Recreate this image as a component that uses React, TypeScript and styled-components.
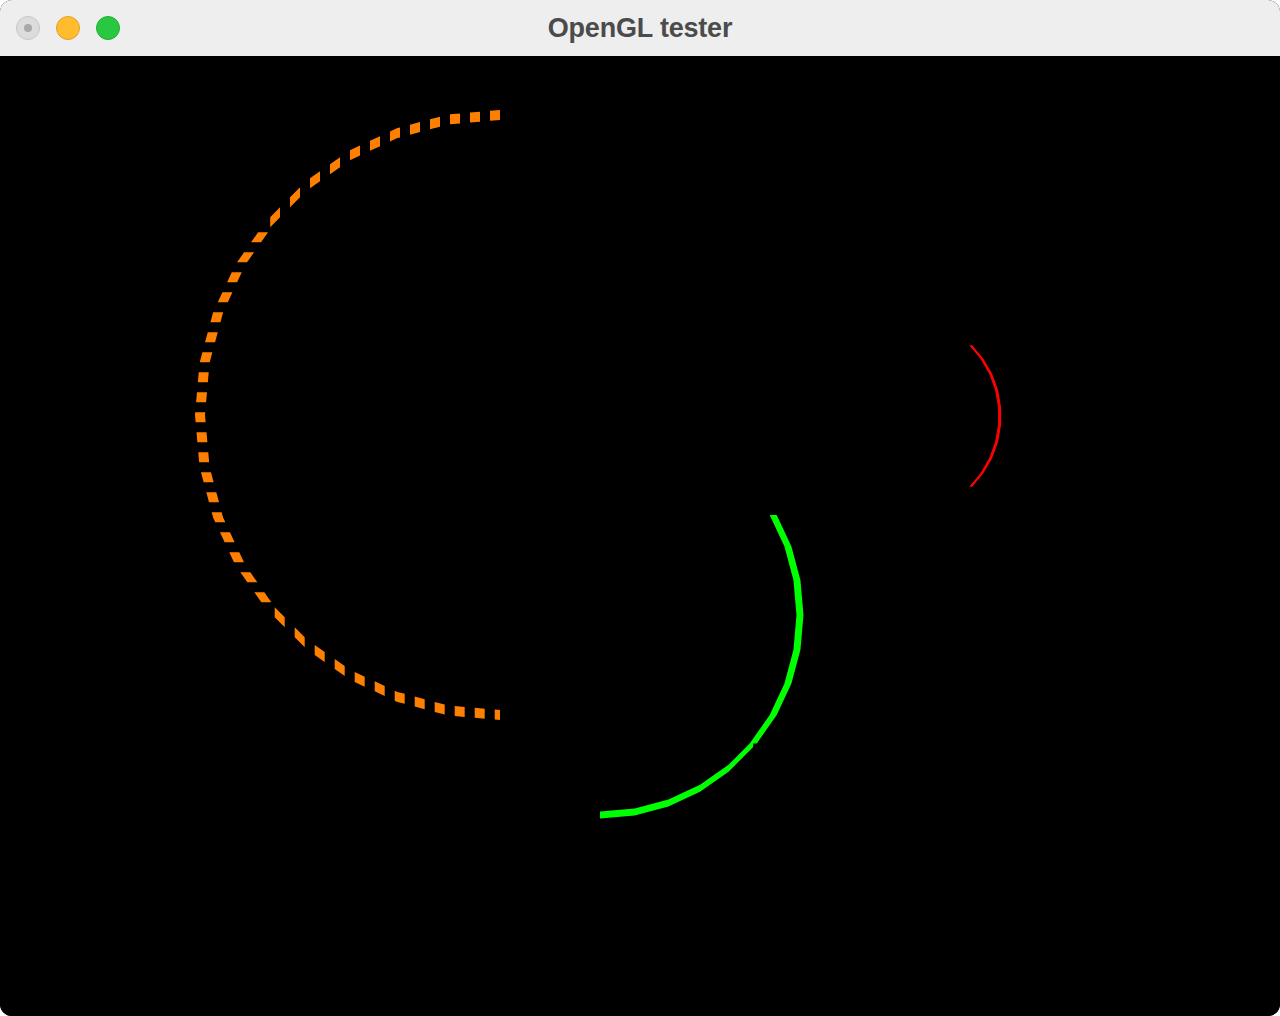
import React from "react";
import styled, { createGlobalStyle } from "styled-components";

type Pt = [number, number];

const GlobalStyle = createGlobalStyle`
  html, body {
    margin: 0;
    padding: 0;
    background: #ffffff;
  }
  body {
    font-family: "Liberation Sans", Arial, sans-serif;
  }
`;

const Window = styled.div`
  width: 1280px;
  height: 1016px;
  display: flex;
  flex-direction: column;
  border-radius: 12px;
  overflow: hidden;
  background: #000;
  box-sizing: border-box;
`;

const TitleBar = styled.div`
  height: 56px;
  flex: 0 0 56px;
  display: grid;
  grid-template-columns: 1fr auto 1fr;
  align-items: center;
  background: #eeeeee;
  box-sizing: border-box;
  padding: 0 16px;
`;

const Lights = styled.div`
  display: flex;
  align-items: center;
  gap: 16px;
`;

type LightKind = "disabled" | "minimize" | "zoom";

const lightFill: Record<LightKind, string> = {
  disabled: "#dcdcdc",
  minimize: "#febc2e",
  zoom: "#28c840",
};
const lightBorder: Record<LightKind, string> = {
  disabled: "#c6c6c6",
  minimize: "#e1a12a",
  zoom: "#22ac36",
};

const Light = styled.span<{ $kind: LightKind }>`
  width: 24px;
  height: 24px;
  box-sizing: border-box;
  border-radius: 50%;
  background: ${(p) => lightFill[p.$kind]};
  border: 1px solid ${(p) => lightBorder[p.$kind]};
  display: flex;
  align-items: center;
  justify-content: center;
`;

const LightDot = styled.span`
  width: 8px;
  height: 8px;
  border-radius: 50%;
  background: #a9a9a9;
`;

const Title = styled.div`
  font-family: "Liberation Sans", Arial, sans-serif;
  font-weight: 700;
  font-size: 27px;
  color: #4b4b4b;
  letter-spacing: -0.2px;
  line-height: 1;
  white-space: nowrap;
`;

const Canvas = styled.div`
  flex: 1;
  background: #000;
  display: flex;
`;

const Scene = styled.svg`
  display: block;
  width: 1280px;
  height: 960px;
`;

function arcPoints(
  cx: number,
  cy: number,
  r: number,
  a0: number,
  a1: number,
  n: number
): Pt[] {
  const pts: Pt[] = [];
  for (let i = 0; i <= n; i++) {
    const a = ((a0 + ((a1 - a0) * i) / n) * Math.PI) / 180;
    pts.push([cx + r * Math.cos(a), cy - r * Math.sin(a)]);
  }
  return pts;
}

function lerp(p: Pt, q: Pt, t: number): Pt {
  return [p[0] + (q[0] - p[0]) * t, p[1] + (q[1] - p[1]) * t];
}

function quad(p0: Pt, p1: Pt, h: number, xMajor: boolean): string {
  let q: Pt[] = xMajor
    ? [
        [p0[0], p0[1] - h],
        [p1[0], p1[1] - h],
        [p1[0], p1[1] + h],
        [p0[0], p0[1] + h],
      ]
    : [
        [p0[0] - h, p0[1]],
        [p1[0] - h, p1[1]],
        [p1[0] + h, p1[1]],
        [p0[0] + h, p0[1]],
      ];
  let area = 0;
  for (let i = 0; i < 4; i++) {
    const a = q[i];
    const b = q[(i + 1) % 4];
    area += a[0] * b[1] - b[0] * a[1];
  }
  if (area < 0) q = q.slice().reverse();
  return (
    "M" + q.map((p) => `${p[0].toFixed(2)} ${p[1].toFixed(2)}`).join("L") + "Z"
  );
}

function glStroke(
  pts: Pt[],
  width: number,
  dash?: { on: number; period: number }
): string {
  let d = "";
  let counter = 0;
  const h = width / 2;
  for (let i = 0; i < pts.length - 1; i++) {
    const p = pts[i];
    const q = pts[i + 1];
    const dx = q[0] - p[0];
    const dy = q[1] - p[1];
    const xMajor = Math.abs(dx) >= Math.abs(dy) - 1e-6;
    const L = Math.max(Math.abs(dx), Math.abs(dy));
    if (!dash) {
      d += quad(p, q, h, xMajor);
      continue;
    }
    let t = 0;
    let guard = 0;
    while (t < 1 - 1e-9 && guard++ < 1000) {
      const phase = ((counter % dash.period) + dash.period) % dash.period;
      const on = phase < dash.on - 1e-7;
      let remaining = on ? dash.on - phase : dash.period - phase;
      if (remaining < 1e-7) remaining = 1e-7;
      const t1 = Math.min(1, t + remaining / L);
      if (on) d += quad(lerp(p, q, t), lerp(p, q, t1), h, xMajor);
      counter += (t1 - t) * L;
      t = t1;
    }
  }
  return d;
}

const orangePath = glStroke(arcPoints(500, 415, 300, 90, 270, 18), 10, {
  on: 10,
  period: 20,
});
const redPath = glStroke(arcPoints(900, 416, 100, 45, -45, 9), 3);
const greenPath = glStroke(arcPoints(600, 615, 200, 30, -90, 12), 7);

export default function App() {
  return (
    <>
      <GlobalStyle />
      <Window>
        <TitleBar>
          <Lights>
            <Light $kind="disabled">
              <LightDot />
            </Light>
            <Light $kind="minimize" />
            <Light $kind="zoom" />
          </Lights>
          <Title>OpenGL tester</Title>
          <div />
        </TitleBar>
        <Canvas>
          <Scene viewBox="0 56 1280 960" xmlns="http://www.w3.org/2000/svg">
            <path d={orangePath} fill="#ff8000" fillRule="nonzero" />
            <path d={redPath} fill="#ff0000" fillRule="nonzero" />
            <path d={greenPath} fill="#00ff00" fillRule="nonzero" />
          </Scene>
        </Canvas>
      </Window>
    </>
  );
}
